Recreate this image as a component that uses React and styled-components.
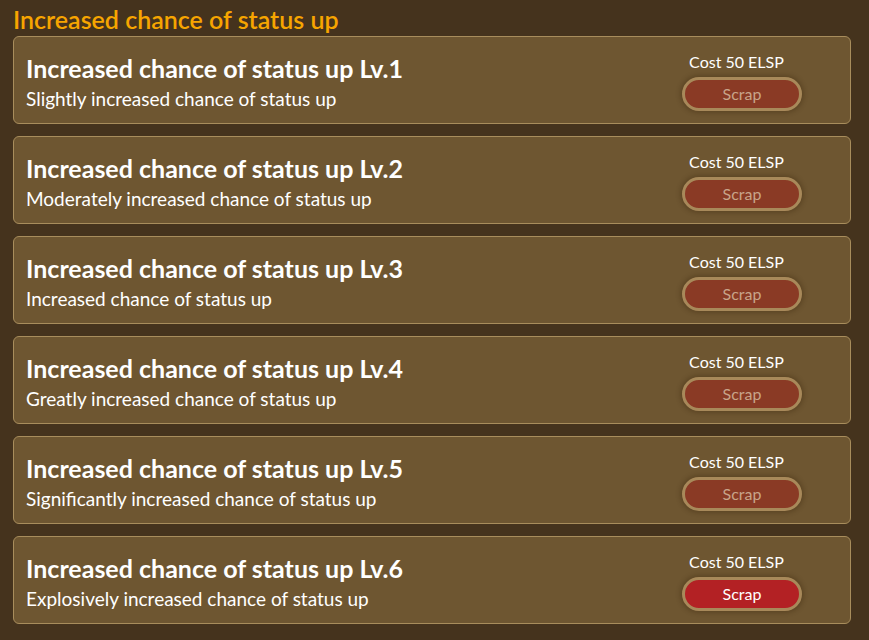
import React from "react";
import styled, { createGlobalStyle } from "styled-components";

const GlobalStyle = createGlobalStyle`
  html, body {
    margin: 0;
    padding: 0;
    background: #45331d;
    font-family: Lato, "Noto Sans", sans-serif;
  }
`;

const Page = styled.div`
  width: 869px;
  height: 640px;
  overflow: hidden;
  padding: 4px 18px 0 13px;
  box-sizing: border-box;
`;

const Heading = styled.h2`
  margin: 0 0 2px 0;
  font-size: 25px;
  line-height: 30px;
  font-weight: 600;
  color: #f7a500;
`;

const List = styled.div`
  display: flex;
  flex-direction: column;
  gap: 12px;
`;

const Card = styled.div`
  height: 88px;
  box-sizing: border-box;
  background: #6e5631;
  border: 1px solid #a88d5c;
  border-radius: 6px;
  display: flex;
  align-items: flex-start;
  justify-content: space-between;
  padding: 0 48px 0 12px;
  color: #fff;
`;

const Info = styled.div`
  display: flex;
  flex-direction: column;
  padding-top: 15px;
  gap: 3px;
`;

const Title = styled.div`
  font-size: 25px;
  font-weight: 700;
  line-height: 32px;
`;

const Desc = styled.div`
  font-size: 19px;
  line-height: 24px;
`;

const Side = styled.div`
  display: flex;
  flex-direction: column;
  align-items: center;
  padding-top: 15px;
  gap: 5px;
`;

const Cost = styled.div`
  font-size: 16px;
  line-height: 20px;
  margin-right: 11px;
`;

const Button = styled.button`
  width: 120px;
  height: 34px;
  border-radius: 17px;
  border: 3px solid #a8895a;
  background: ${(p) => (p.active ? "#b32124" : "#8a3a25")};
  color: ${(p) => (p.active ? "#ffffff" : "#c8a48a")};
  box-shadow: 0 0 4px 2px rgba(60, 40, 15, 0.35);
  font-family: inherit;
  font-size: 16px;
  line-height: 1;
  padding: 0;
  cursor: pointer;
`;

const items = [
  "Slightly increased chance of status up",
  "Moderately increased chance of status up",
  "Increased chance of status up",
  "Greatly increased chance of status up",
  "Significantly increased chance of status up",
  "Explosively increased chance of status up",
];

export default function App() {
  return (
    <>
      <GlobalStyle />
      <Page>
        <Heading>Increased chance of status up</Heading>
        <List>
          {items.map((desc, i) => (
            <Card key={i}>
              <Info>
                <Title>Increased chance of status up Lv.{i + 1}</Title>
                <Desc>{desc}</Desc>
              </Info>
              <Side>
                <Cost>Cost 50 ELSP</Cost>
                <Button active={i === 5}>Scrap</Button>
              </Side>
            </Card>
          ))}
        </List>
      </Page>
    </>
  );
}
